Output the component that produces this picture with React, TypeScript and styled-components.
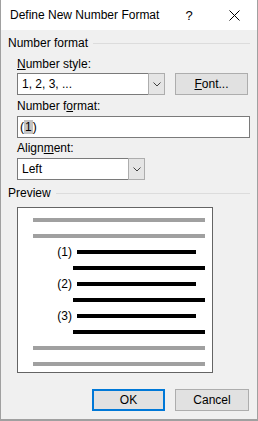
import React from "react";
import styled, { createGlobalStyle } from "styled-components";

const Global = createGlobalStyle`
  html, body { margin: 0; padding: 0; background: #f0f0f0; }
  body { font-family: "Liberation Sans", Arial, sans-serif; font-size: 12px; color: #000; }
  * { box-sizing: border-box; }
`;

const Window = styled.div`
  width: 258px;
  height: 421px;
  background: #f0f0f0;
  border: 1px solid #a0a0a0;
  border-top: none;
  border-bottom-width: 2px;
  display: flex;
  flex-direction: column;
`;

const TitleBar = styled.div`
  height: 30px;
  background: #fff;
  display: flex;
  align-items: center;
`;

const TitleText = styled.div`
  flex: 1;
  padding-left: 9px;
  line-height: 15px;
  font-size: 12px;
`;

const TitleButton = styled.div<{ $w: number }>`
  width: ${(p) => p.$w}px;
  height: 30px;
  display: flex;
  align-items: center;
  justify-content: center;
  font-size: 13px;
`;

const Body = styled.div`
  flex: 1;
  display: flex;
  flex-direction: column;
  padding: 0 7px;
`;

const GroupHeader = styled.div`
  margin-top: 6px;
  height: 15px;
  line-height: 15px;
  display: flex;
  align-items: center;
  gap: 5px;
`;

const Rule = styled.div`
  flex: 1;
  height: 1px;
  background: #dcdcdc;
`;

const Section = styled.div`
  padding-left: 9px;
  display: flex;
  flex-direction: column;
`;

const Label = styled.div<{ $mt: number }>`
  margin-top: ${(p) => p.$mt}px;
  height: 15px;
  line-height: 15px;
  u { text-underline-offset: 1px; }
`;

const Row = styled.div<{ $mt: number }>`
  margin-top: ${(p) => p.$mt}px;
  display: flex;
  align-items: center;
  gap: 10px;
`;

const Combo = styled.div<{ $w: number }>`
  width: ${(p) => p.$w}px;
  height: 22px;
  display: flex;
  background: #fff;
  border: 1px solid #7a7a7a;
`;

const ComboText = styled.div`
  flex: 1;
  padding-left: 4px;
  line-height: 20px;
`;

const DropButton = styled.div`
  width: 17px;
  margin: -1px -1px -1px 0;
  background: #e5e5e5;
  border: 1px solid #adadad;
  display: flex;
  align-items: center;
  justify-content: center;
`;

const TextInput = styled.div`
  width: 233px;
  height: 22px;
  background: #fff;
  border: 1px solid #7a7a7a;
  padding-left: 2px;
  line-height: 20px;
`;

const Selected = styled.span`
  background: #c4c4c4;
  padding: 0 1px;
`;

const Button = styled.div<{ $w: number; $default?: boolean }>`
  width: ${(p) => p.$w}px;
  height: 22px;
  background: #e1e1e1;
  border: ${(p) => (p.$default ? "2px solid #0078d7" : "1px solid #adadad")};
  display: flex;
  align-items: center;
  justify-content: center;
  line-height: 15px;
  u { text-underline-offset: 1px; }
`;

const PreviewBox = styled.div`
  margin-top: 6px;
  width: 196px;
  height: 166px;
  background: #fff;
  border: 1px solid #646464;
  padding: 4px 7px 0 15px;
  display: flex;
  flex-direction: column;
`;

const PRow = styled.div<{ $indent?: number }>`
  height: 16px;
  display: flex;
  align-items: center;
  padding-left: ${(p) => p.$indent ?? 0}px;
`;

const Bar = styled.div<{ $gray?: boolean; $w?: number }>`
  height: 4px;
  background: ${(p) => (p.$gray ? "#a0a0a0" : "#000")};
  ${(p) => (p.$w ? `width: ${p.$w}px;` : "flex: 1;")}
`;

const Num = styled.div`
  width: 40px;
  text-align: right;
  padding-right: 1px;
  margin-right: 4px;
  line-height: 15px;
  color: #000;
`;

const Footer = styled.div`
  margin-top: 16px;
  display: flex;
  justify-content: flex-end;
  gap: 10px;
  padding-right: 1px;
`;

const Chevron = () => (
  <svg width="8" height="5" viewBox="0 0 8 5">
    <polyline points="0.5,0.5 4,4 7.5,0.5" fill="none" stroke="#404040" strokeWidth="1" />
  </svg>
);

const CloseIcon = () => (
  <svg width="11" height="11" viewBox="0 0 11 11">
    <path d="M0.5 0.5 L10.5 10.5 M10.5 0.5 L0.5 10.5" stroke="#000" strokeWidth="1" />
  </svg>
);

const items = ["(1)", "(2)", "(3)"];

export default function App() {
  return (
    <>
      <Global />
      <Window>
        <TitleBar>
          <TitleText>Define New Number Format</TitleText>
          <TitleButton $w={44}>?</TitleButton>
          <TitleButton $w={46}>
            <CloseIcon />
          </TitleButton>
        </TitleBar>
        <Body>
          <GroupHeader>
            <span>Number format</span>
            <Rule />
          </GroupHeader>
          <Section>
            <Label $mt={6}>
              <u>N</u>umber style:
            </Label>
            <Row $mt={1}>
              <Combo $w={148}>
                <ComboText>1, 2, 3, ...</ComboText>
                <DropButton>
                  <Chevron />
                </DropButton>
              </Combo>
              <Button $w={73}>
                <span>
                  <u>F</u>ont...
                </span>
              </Button>
            </Row>
            <Label $mt={4}>
              Number f<u>o</u>rmat:
            </Label>
            <Row $mt={2}>
              <TextInput>
                (<Selected>1</Selected>)
              </TextInput>
            </Row>
            <Label $mt={3}>
              Align<u>m</u>ent:
            </Label>
            <Row $mt={2}>
              <Combo $w={128}>
                <ComboText>Left</ComboText>
                <DropButton>
                  <Chevron />
                </DropButton>
              </Combo>
            </Row>
          </Section>
          <GroupHeader>
            <span>Preview</span>
            <Rule />
          </GroupHeader>
          <Section>
            <PreviewBox>
              <PRow>
                <Bar $gray />
              </PRow>
              <PRow>
                <Bar $gray />
              </PRow>
              {items.map((n) => (
                <React.Fragment key={n}>
                  <PRow>
                    <Num>{n}</Num>
                    <Bar $w={119} />
                  </PRow>
                  <PRow $indent={40}>
                    <Bar />
                  </PRow>
                </React.Fragment>
              ))}
              <PRow>
                <Bar $gray />
              </PRow>
              <PRow>
                <Bar $gray />
              </PRow>
            </PreviewBox>
          </Section>
          <Footer>
            <Button $w={73} $default>
              OK
            </Button>
            <Button $w={74}>Cancel</Button>
          </Footer>
        </Body>
      </Window>
    </>
  );
}
